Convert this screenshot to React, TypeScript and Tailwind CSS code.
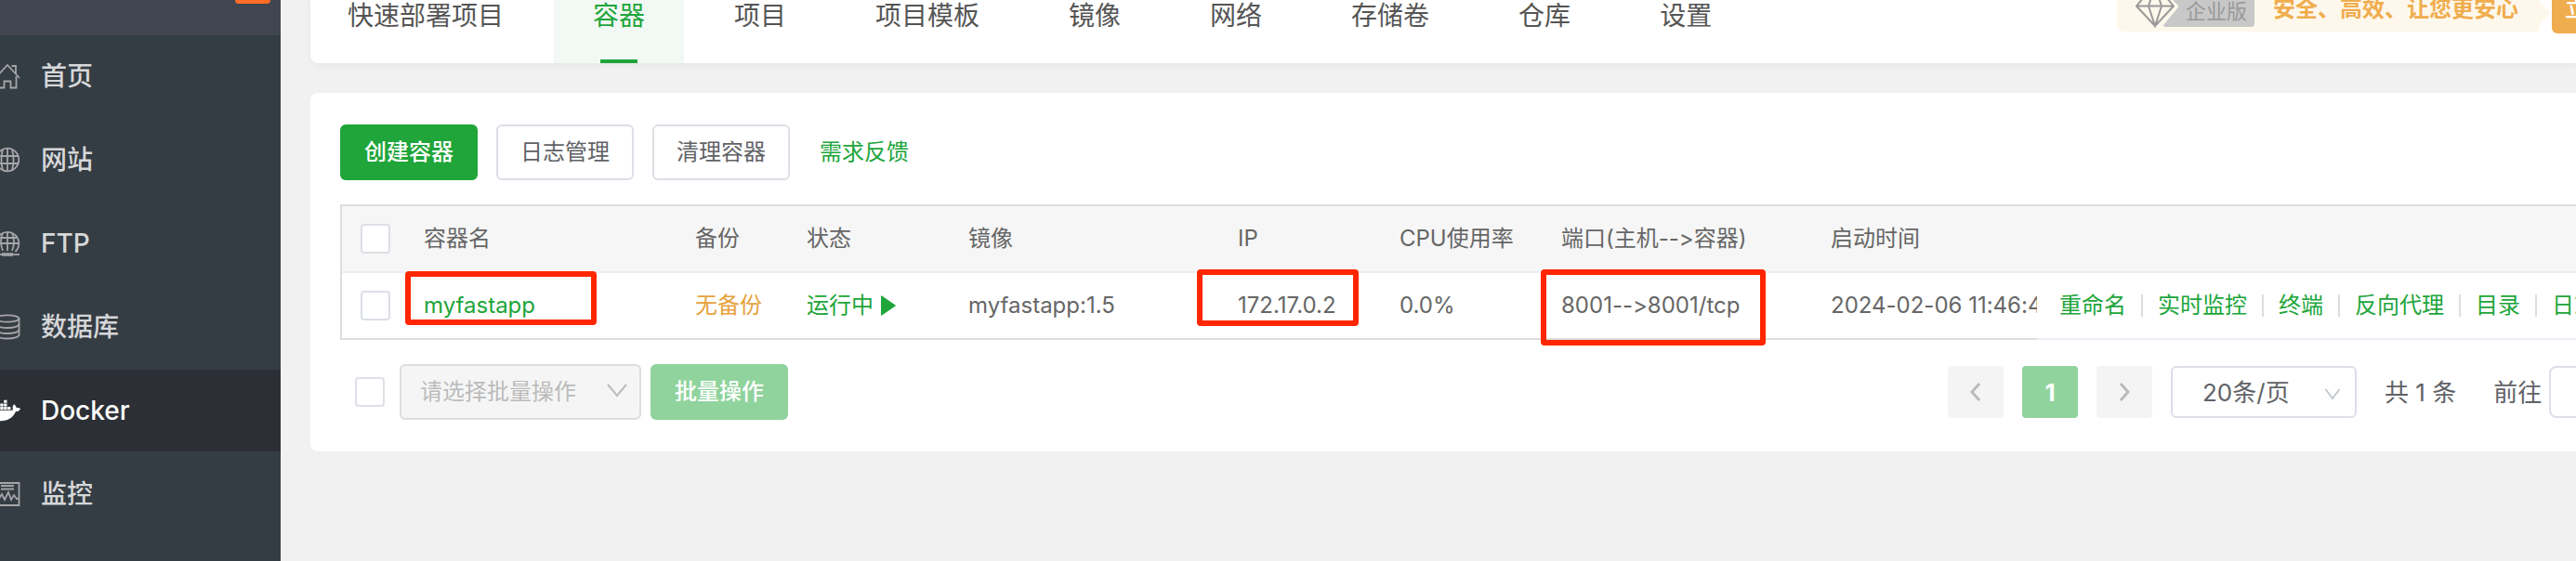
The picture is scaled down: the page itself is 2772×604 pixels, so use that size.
import React from "react";
import { FaDocker } from "react-icons/fa";

const font = "font-[Inter,'Noto_Sans_CJK_SC',sans-serif] [font-variant-ligatures:no-contextual]";

const iconProps = {
  viewBox: "0 0 28 28",
  fill: "none",
  stroke: "currentColor",
  strokeWidth: 1.8,
  className: "size-7 shrink-0 text-[#a4a5a8]",
  "aria-hidden": true,
} as const;

function HomeIcon() {
  return (
    <svg {...iconProps}>
      <path d="M1 16 14 2l13 14" />
      <path d="M18.500 3h4.500v8" />
      <path d="M4.500 14v12.500h6v-7h7v7h6V14" />
    </svg>
  );
}

function GlobeIcon() {
  return (
    <svg {...iconProps}>
      <circle cx="14" cy="14" r="12.300" />
      <path d="M14 1.700v24.600M2.500 10h23M2.500 18h23M9 3C7 10 7 18 9 25M19 3c2 7 2 15 0 22" />
    </svg>
  );
}

function FtpIcon() {
  return (
    <svg {...iconProps}>
      <path d="M5.500 23a12.300 12.300 0 1 1 17 0" />
      <path d="M14 1.700V22M2 14h24M4 8h20M9 3c-2.500 6-2.500 13 0 19M19 3c2.500 6 2.500 13 0 19" />
      <path d="M1 26h26" />
      <path d="M8 26h12" strokeWidth="3.500" />
    </svg>
  );
}

function DatabaseIcon() {
  return (
    <svg {...iconProps}>
      <ellipse cx="14" cy="5" rx="12.500" ry="3.700" />
      <path d="M1.500 5v17.500c0 2.200 5.600 4 12.500 4s12.500-1.800 12.500-4V5" />
      <path d="M1.500 11c0 2.200 5.600 4 12.500 4s12.500-1.800 12.500-4M1.500 17c0 2.200 5.600 4 12.500 4s12.500-1.800 12.500-4" />
    </svg>
  );
}

function MonitorIcon() {
  return (
    <svg {...iconProps}>
      <path d="M1.500 2h25v24h-25zM7 5h14M7 8.500h14" />
      <path d="M2 19h3l3-5 3 6 4-8 3 8 3-5 3 4h3" />
    </svg>
  );
}

const menu = [
  { label: "首页", icon: <HomeIcon /> },
  { label: "网站", icon: <GlobeIcon /> },
  { label: "FTP", icon: <FtpIcon /> },
  { label: "数据库", icon: <DatabaseIcon /> },
  { label: "Docker", icon: <FaDocker className="size-8 shrink-0" aria-hidden />, active: true },
  { label: "监控", icon: <MonitorIcon /> },
];

function Sidebar() {
  return (
    <aside className="w-[302px] shrink-0 overflow-hidden bg-[#353d44]">
      <div className="flex h-[38px] items-start justify-end bg-[#40454f] pr-[11px]">
        <span className="h-1 w-[38px] rounded-b-sm bg-[#ff6c26]" />
      </div>
      <nav className="flex flex-col gap-0.5">
        {menu.map((m) => (
          <a
            key={m.label}
            href="#"
            className={
              m.active
                ? "-ml-1.5 flex h-[88px] items-center gap-[22px] bg-[#2c3036] text-[28px] font-medium text-white"
                : "-ml-1.5 flex h-[88px] items-center gap-[22px] text-[28px] font-medium text-[#d6d7d9]"
            }
          >
            <span className="flex w-7 shrink-0 justify-end">{m.icon}</span>
            {m.label}
          </a>
        ))}
      </nav>
    </aside>
  );
}

const tabs = ["快速部署项目", "容器", "项目", "项目模板", "镜像", "网络", "存储卷", "仓库", "设置"];

function Promo() {
  return (
    <div className="flex w-max items-start whitespace-nowrap">
      <div className="flex h-[34px] items-start rounded-bl-lg bg-[#fef8ec] pl-5">
        <svg viewBox="0 0 42 30" className="h-[30px] w-[42px] shrink-0" fill="none" stroke="#999" strokeWidth="2" aria-hidden>
          <path d="M9 -3h24l8 9.500L21 28 1 6.500zM1 6.500h40M17 -3l-3 9.500L21 28l7-21.500L25-3" />
        </svg>
        <div className="-ml-3 flex">
          <svg viewBox="0 0 18 29" className="h-[29px] w-[18px] shrink-0" aria-hidden>
            <path d="M10 0l5 5q2 2 0 4L0 27q0 2 2 2h16V0z" fill="#c8c8c8" />
          </svg>
          <span className="h-[29px] rounded-br-sm bg-[#c8c8c8] pr-2 pl-1.5 text-[22px] leading-6 text-[#999]">企业版</span>
        </div>
        <span className="px-5 text-2xl leading-5 font-bold text-[#f0ad4e]">安全、高效、让您更安心</span>
      </div>
      <svg viewBox="0 0 16 34" className="h-[34px] w-4 shrink-0" aria-hidden>
        <path d="M0 0h2l13 14L3 26q-1 8-3 8z" fill="#fef8ec" />
      </svg>
      <button className="h-9 rounded-bl-md bg-[#f0ad4e] px-3.5 text-2xl leading-5 font-medium text-white">
        <span className="block h-9">立即升级</span>
      </button>
    </div>
  );
}

function TopTabs() {
  return (
    <header className="flex h-[68px] justify-between rounded-bl-lg bg-white shadow-[0_2px_8px_rgba(0,0,0,0.05)]">
      <nav className="-ml-0.5 flex gap-3">
        {tabs.map((t) =>
          t === "容器" ? (
            <a
              key={t}
              href="#"
              aria-current="page"
              className="flex flex-col items-center justify-between bg-[#f2f8f4] px-[42px] text-[28px] leading-[34px] whitespace-nowrap text-[#20a53a]"
            >
              {t}
              <span className="h-1 w-10 bg-[#20a53a]" />
            </a>
          ) : (
            <a key={t} href="#" className="px-[42px] text-[28px] leading-[34px] whitespace-nowrap text-[#555]">
              {t}
            </a>
          ),
        )}
      </nav>
      <div className="w-[494px] shrink-0 overflow-hidden">
        <Promo />
      </div>
    </header>
  );
}

const check = "block size-8 appearance-none rounded-sm border-2 border-[#dcdfe6] bg-white";
const outline = "h-[60px] rounded-md border-2 border-[#dcdfe6] bg-white px-6 text-2xl text-[#606266]";
const mark = "pointer-events-none absolute rounded-sm border-6 border-[#ff2600]";
const th = "border-b-2 border-[#ebeef5] px-5 text-left font-normal whitespace-nowrap";
const td = "relative border-b-2 border-[#ddd] px-5 whitespace-nowrap";

const actions = ["重命名", "实时监控", "终端", "反向代理", "目录", "日志"];

function ContainerTable() {
  return (
    <table className="mt-[26px] w-full table-fixed border-separate border-spacing-0 border-t-2 border-l-2 border-[#ddd] text-2xl text-[#666]">
      <colgroup>
        <col className="w-[68px]" />
        <col className="w-[292px]" />
        <col className="w-[120px]" />
        <col className="w-[174px]" />
        <col className="w-[290px]" />
        <col className="w-[174px]" />
        <col className="w-[174px]" />
        <col className="w-[290px]" />
        <col className="w-[242px]" />
        <col />
      </colgroup>
      <thead>
        <tr className="h-[72px] bg-[#f6f6f6]">
          <th className={th}>
            <input type="checkbox" aria-label="全选" className={check} />
          </th>
          <th className={th}>容器名</th>
          <th className={th}>备份</th>
          <th className={th}>状态</th>
          <th className={th}>镜像</th>
          <th className={th}>IP</th>
          <th className={th}>CPU使用率</th>
          <th className={th}>端口(主机--&gt;容器)</th>
          <th className={th}>启动时间</th>
          <th className={th} aria-label="操作" />
        </tr>
      </thead>
      <tbody>
        <tr className="h-[72px]">
          <td className={td}>
            <input type="checkbox" aria-label="myfastapp" className={check} />
          </td>
          <td className={td}>
            <a href="#" className="text-[#20a53a]">myfastapp</a>
            <span className={`${mark} -top-0.5 left-0 h-[58px] w-[206px]`} />
          </td>
          <td className={`${td} text-[#e6a23c]`}>无备份</td>
          <td className={td}>
            <a href="#" className="flex items-center gap-2 text-[#20a53a]">
              运行中
              <svg viewBox="0 0 16 22" className="h-[22px] w-4 shrink-0" fill="currentColor" aria-hidden>
                <path d="M0 1q0-1 1-.5L15.500 10.500q.5.500 0 1L1 21.500q-1 .5-1-.5z" />
              </svg>
            </a>
          </td>
          <td className={td}>myfastapp:1.5</td>
          <td className={td}>
            172.17.0.2
            <span className={`${mark} -top-1 -left-6 h-[61px] w-[174px]`} />
          </td>
          <td className={td}>0.0%</td>
          <td className={td}>
            8001--&gt;8001/tcp
            <span className={`${mark} -top-1 -left-0.5 h-[82px] w-[242px]`} />
          </td>
          <td className={`${td} overflow-hidden pr-0`}>2024-02-06 11:46:43</td>
          <td className="overflow-hidden border-b-2 border-[#ebeef5] pl-6">
            <div className="flex items-center gap-4 whitespace-nowrap">
              {actions.map((a, i) => (
                <React.Fragment key={a}>
                  {i > 0 && <span className="h-6 w-0.5 shrink-0 bg-[#ddd]" />}
                  <a href="#" className="shrink-0 text-[#20a53a]">{a}</a>
                </React.Fragment>
              ))}
            </div>
          </td>
        </tr>
      </tbody>
    </table>
  );
}

function Chevron({ d, className }: { d: string; className: string }) {
  return (
    <svg viewBox="0 0 24 24" className={className} fill="none" stroke="currentColor" aria-hidden>
      <path d={d} />
    </svg>
  );
}

function Footer() {
  return (
    <div className="mt-[26px] flex items-center justify-between">
      <div className="flex items-center pl-4">
        <input type="checkbox" aria-label="全选当前页" className={check} />
        <div className="relative ml-4">
          <select
            disabled
            aria-label="批量操作类型"
            className="h-[60px] w-[260px] appearance-none rounded-md border-2 border-[#ddd] bg-[#f5f5f5] pl-5 text-2xl text-[#bbb] opacity-100"
          >
            <option>请选择批量操作</option>
          </select>
          <Chevron d="m2 6 10 12L22 6" className="pointer-events-none absolute top-4 right-3.5 size-6 stroke-2 text-[#bbb]" />
        </div>
        <button disabled className="ml-2.5 h-[60px] rounded-md bg-[#90d39d] px-[26px] text-2xl font-medium text-white">
          批量操作
        </button>
      </div>
      <div className="flex w-[676px] shrink-0 items-center overflow-hidden text-[26px] whitespace-nowrap text-[#606266]">
        <button aria-label="上一页" className="flex h-14 w-[60px] shrink-0 items-center justify-center rounded-sm bg-[#f4f4f5] text-[#bbb]">
          <Chevron d="M16 3 8 12l8 9" className="size-6 stroke-3" />
        </button>
        <button className="ml-5 h-14 w-[60px] shrink-0 rounded-sm bg-[#90d39d] font-bold text-white">1</button>
        <button aria-label="下一页" className="ml-5 flex h-14 w-[60px] shrink-0 items-center justify-center rounded-sm bg-[#f4f4f5] text-[#bbb]">
          <Chevron d="m8 3 8 9-8 9" className="size-6 stroke-3" />
        </button>
        <div className="relative ml-5 shrink-0">
          <select aria-label="每页条数" className="h-14 w-[200px] appearance-none rounded-md border-2 border-[#dcdfe6] bg-white pl-8">
            <option>20条/页</option>
          </select>
          <Chevron d="m3 6 9 12 9-12" className="pointer-events-none absolute top-5 right-4 size-5 stroke-2 text-[#c0c4cc]" />
        </div>
        <span className="ml-[30px]">共 1 条</span>
        <label className="ml-10 flex items-center gap-2">
          前往
          <input type="text" className="h-14 w-24 rounded-lg border-2 border-[#dcdfe6] bg-white px-4" />
        </label>
      </div>
    </div>
  );
}

export default function App() {
  return (
    <div className={`flex min-h-screen overflow-hidden bg-[#f1f1f1] ${font}`}>
      <Sidebar />
      <main className="min-w-0 flex-1 pl-8">
        <TopTabs />
        <section className="mt-8 rounded-l-lg bg-white pt-[34px] pb-[34px] pl-8">
          <div className="flex items-center gap-5">
            <button className="h-[60px] rounded-md bg-[#20a53a] px-[26px] text-2xl font-medium text-white">创建容器</button>
            <button className={outline}>日志管理</button>
            <button className={outline}>清理容器</button>
            <a href="#" className="ml-3 text-2xl text-[#20a53a]">需求反馈</a>
          </div>
          <ContainerTable />
          <Footer />
        </section>
      </main>
    </div>
  );
}
